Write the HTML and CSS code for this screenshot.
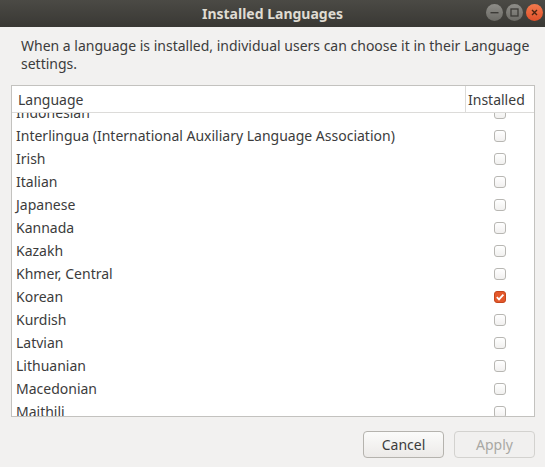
FILE: index.html
```html
<!DOCTYPE html>
<html>
<head>
    <meta charset="UTF-8">
    <title>Installed Languages</title>
    <link rel="stylesheet" href="styles.css">
</head>
<body>
    <!-- window title bar -->
    <div class="titlebar">
        <span class="title">Installed Languages</span>
        <div class="wm_buttons">
            <span class="wm_btn">
                <svg width="17" height="17" viewBox="0 0 17 17"><rect x="4.5" y="8" width="8" height="1.4" fill="#3c3b37"/></svg>
            </span>
            <span class="wm_btn">
                <svg width="17" height="17" viewBox="0 0 17 17"><rect x="5" y="5" width="7" height="7" fill="none" stroke="#3c3b37" stroke-width="1.3"/></svg>
            </span>
            <span class="wm_btn close">
                <svg width="17" height="17" viewBox="0 0 17 17"><path d="M6 6 L11 11 M11 6 L6 11" stroke="#4a2412" stroke-width="1.4"/></svg>
            </span>
        </div>
    </div>

    <div class="content">
        <p class="intro">When a language is installed, individual users can choose it in their Language settings.</p>

        <!-- language list -->
        <div class="lang_table">
            <div class="lang_head">
                <span class="col_name">Language</span>
                <span class="col_inst">Installed</span>
            </div>
            <div class="lang_body">
                <div class="lang_rows">
                    <div class="row"><span class="name">Indonesian</span><span class="inst"><i class="check"></i></span></div>
                    <div class="row"><span class="name">Interlingua (International Auxiliary Language Association)</span><span class="inst"><i class="check"></i></span></div>
                    <div class="row"><span class="name">Irish</span><span class="inst"><i class="check"></i></span></div>
                    <div class="row"><span class="name">Italian</span><span class="inst"><i class="check"></i></span></div>
                    <div class="row"><span class="name">Japanese</span><span class="inst"><i class="check"></i></span></div>
                    <div class="row"><span class="name">Kannada</span><span class="inst"><i class="check"></i></span></div>
                    <div class="row"><span class="name">Kazakh</span><span class="inst"><i class="check"></i></span></div>
                    <div class="row"><span class="name">Khmer, Central</span><span class="inst"><i class="check"></i></span></div>
                    <div class="row"><span class="name">Korean</span><span class="inst"><i class="check on"><svg width="10" height="10" viewBox="0 0 10 10"><path d="M1.8 5.2 L4 7.4 L8.4 2.6" fill="none" stroke="#fff" stroke-width="1.8"/></svg></i></span></div>
                    <div class="row"><span class="name">Kurdish</span><span class="inst"><i class="check"></i></span></div>
                    <div class="row"><span class="name">Latvian</span><span class="inst"><i class="check"></i></span></div>
                    <div class="row"><span class="name">Lithuanian</span><span class="inst"><i class="check"></i></span></div>
                    <div class="row"><span class="name">Macedonian</span><span class="inst"><i class="check"></i></span></div>
                    <div class="row"><span class="name">Maithili</span><span class="inst"><i class="check"></i></span></div>
                </div>
            </div>
        </div>

        <div class="btn_row">
            <button class="btn">Cancel</button>
            <button class="btn disabled">Apply</button>
        </div>
    </div>
</body>
</html>
```

FILE: styles.css
```css
/* base */
*{margin:0;padding:0;box-sizing:border-box;}
html,body{width:100%;height:100%;}
body{background:#f2f1f0;font-family:"Noto Sans","DejaVu Sans",sans-serif;font-size:14px;color:#3c3c3c;overflow:hidden;}

/* title bar */
.titlebar{height:27px;background:linear-gradient(#4b4a45,#393834);display:flex;align-items:center;justify-content:center;position:relative;}
.title{color:#dfdbd2;font-weight:bold;font-size:14px;}
.wm_buttons{position:absolute;top:4px;right:2px;display:flex;gap:3px;}
.wm_btn{width:17px;height:17px;border-radius:50%;background:linear-gradient(#8e8d88,#6b6a65);display:block;}
.wm_btn svg{display:block;}
.wm_btn.close{background:linear-gradient(#f37a4d,#e0502a);}

/* content */
.content{padding:0 10px 0 11px;}
.intro{padding:10px 0 0 10px;line-height:18px;height:58px;}

/* table */
.lang_table{border:1px solid #c3c2bf;background:#fff;}
.lang_head{display:flex;height:27px;border-bottom:1px solid #dcdbd9;align-items:center;}
.col_name{flex:1;padding-left:6px;}
.col_inst{width:69px;height:100%;border-left:1px solid #dcdbd9;display:flex;align-items:center;padding-left:2px;}
.lang_body{height:303px;overflow:hidden;}
.lang_rows{margin-top:-12px;}
.row{display:flex;height:23px;align-items:center;}
.row .name{flex:1;padding-left:4px;white-space:nowrap;}
.row .inst{width:69px;display:flex;justify-content:center;}
.check{display:block;width:12px;height:12px;border:1px solid #b8b7b3;border-radius:3px;background:linear-gradient(#ffffff,#f1f0ef);}
.check.on{background:#e4582b;border-color:#c4461d;display:flex;align-items:center;justify-content:center;}
.check svg{display:block;}

/* buttons */
.btn_row{display:flex;justify-content:flex-end;gap:10px;margin-top:14px;}
.btn{width:81px;height:27px;border:1px solid #b5b3ae;border-radius:4px;background:linear-gradient(#fbfbfa,#eceae8);font-family:inherit;font-size:14px;color:#3c3c3c;}
.btn.disabled{color:#a9a8a4;border-color:#d3d2cf;background:#f1f0ef;}
```
